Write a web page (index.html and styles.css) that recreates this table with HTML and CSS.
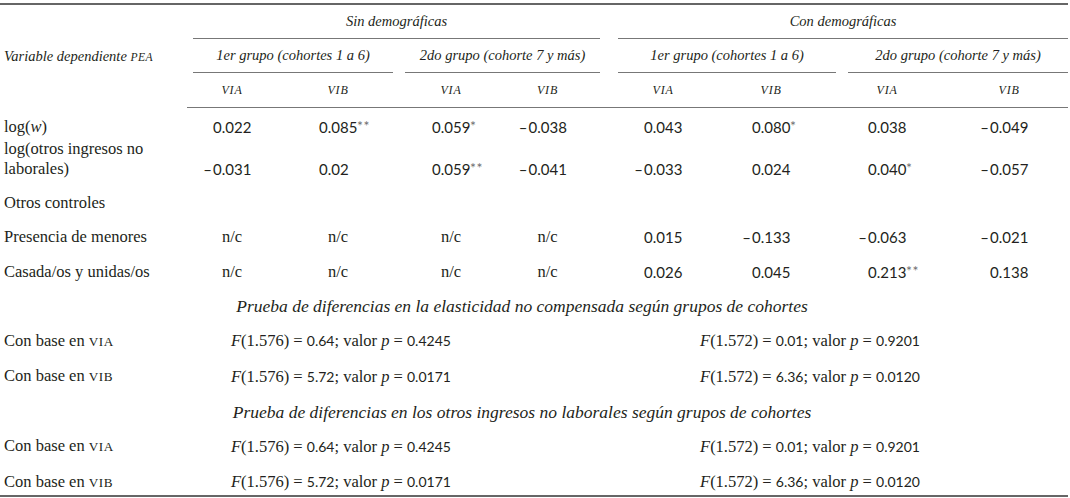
FILE: index.html
```html
<!DOCTYPE html>
<html lang="es">
<head>
<meta charset="utf-8">
<title>Tabla</title>
<link rel="stylesheet" href="styles.css">
</head>
<body>
<table class="t">
  <colgroup>
    <col class="c-lab"><col class="c1"><col class="c2"><col class="c3"><col class="c4"><col class="c-sp"><col class="c5"><col class="c6"><col class="c7"><col class="c8">
  </colgroup>
  <thead>
    <tr class="h1">
      <th class="lab" rowspan="3">Variable dependiente <span class="sc">pea</span></th>
      <th colspan="4"><div class="rule">Sin demográficas</div></th>
      <th></th>
      <th colspan="4"><div class="rule rule-end">Con demográficas</div></th>
    </tr>
    <tr class="h2">
      <th colspan="2"><div class="rule">1er grupo (cohortes 1 a 6)</div></th>
      <th colspan="2"><div class="rule">2do grupo (cohorte 7 y más)</div></th>
      <th></th>
      <th colspan="2"><div class="rule">1er grupo (cohortes 1 a 6)</div></th>
      <th colspan="2"><div class="rule rule-end">2do grupo (cohorte 7 y más)</div></th>
    </tr>
    <tr class="h3 cols">
      <th class="k1">VIA</th><th class="k2">VIB</th><th class="k3">VIA</th><th class="k4">VIB</th><th></th><th class="k5">VIA</th><th class="k6">VIB</th><th class="k7">VIA</th><th class="k8">VIB</th>
    </tr>
  </thead>
  <tbody>
    <tr class="r-first cols">
      <td class="lab">log(<i>w</i>)</td>
      <td class="k1"><span class="v"><span class="m"></span><span class="d">0.022</span><span class="s"></span></span></td>
      <td class="k2"><span class="v"><span class="m"></span><span class="d">0.085</span><span class="s">**</span></span></td>
      <td class="k3"><span class="v"><span class="m"></span><span class="d">0.059</span><span class="s">*</span></span></td>
      <td class="k4"><span class="v"><span class="m">–</span><span class="d">0.038</span><span class="s"></span></span></td>
      <td></td>
      <td class="k5"><span class="v"><span class="m"></span><span class="d">0.043</span><span class="s"></span></span></td>
      <td class="k6"><span class="v"><span class="m"></span><span class="d">0.080</span><span class="s">*</span></span></td>
      <td class="k7"><span class="v"><span class="m"></span><span class="d">0.038</span><span class="s"></span></span></td>
      <td class="k8"><span class="v"><span class="m">–</span><span class="d">0.049</span><span class="s"></span></span></td>
    </tr>
    <tr class="r-two cols">
      <td class="lab">log(otros ingresos no laborales)</td>
      <td class="k1"><span class="v"><span class="m">–</span><span class="d">0.031</span><span class="s"></span></span></td>
      <td class="k2"><span class="v"><span class="m"></span><span class="d">0.02</span><span class="s"></span></span></td>
      <td class="k3"><span class="v"><span class="m"></span><span class="d">0.059</span><span class="s">**</span></span></td>
      <td class="k4"><span class="v"><span class="m">–</span><span class="d">0.041</span><span class="s"></span></span></td>
      <td></td>
      <td class="k5"><span class="v"><span class="m">–</span><span class="d">0.033</span><span class="s"></span></span></td>
      <td class="k6"><span class="v"><span class="m"></span><span class="d">0.024</span><span class="s"></span></span></td>
      <td class="k7"><span class="v"><span class="m"></span><span class="d">0.040</span><span class="s">*</span></span></td>
      <td class="k8"><span class="v"><span class="m">–</span><span class="d">0.057</span><span class="s"></span></span></td>
    </tr>
    <tr>
      <td class="lab">Otros controles</td>
      <td colspan="9"></td>
    </tr>
    <tr class="cols">
      <td class="lab">Presencia de menores</td>
      <td class="nc k1">n/c</td><td class="nc k2">n/c</td><td class="nc k3">n/c</td><td class="nc k4">n/c</td>
      <td></td>
      <td class="k5"><span class="v"><span class="m"></span><span class="d">0.015</span><span class="s"></span></span></td>
      <td class="k6"><span class="v"><span class="m">–</span><span class="d">0.133</span><span class="s"></span></span></td>
      <td class="k7"><span class="v"><span class="m">–</span><span class="d">0.063</span><span class="s"></span></span></td>
      <td class="k8"><span class="v"><span class="m">–</span><span class="d">0.021</span><span class="s"></span></span></td>
    </tr>
    <tr class="cols">
      <td class="lab">Casada/os y unidas/os</td>
      <td class="nc k1">n/c</td><td class="nc k2">n/c</td><td class="nc k3">n/c</td><td class="nc k4">n/c</td>
      <td></td>
      <td class="k5"><span class="v"><span class="m"></span><span class="d">0.026</span><span class="s"></span></span></td>
      <td class="k6"><span class="v"><span class="m"></span><span class="d">0.045</span><span class="s"></span></span></td>
      <td class="k7"><span class="v"><span class="m"></span><span class="d">0.213</span><span class="s">**</span></span></td>
      <td class="k8"><span class="v"><span class="m"></span><span class="d">0.138</span><span class="s"></span></span></td>
    </tr>
    <tr>
      <td class="pr" colspan="10">Prueba de diferencias en la elasticidad no compensada según grupos de cohortes</td>
    </tr>
    <tr>
      <td class="lab">Con base en <span class="sc">via</span></td>
      <td class="f f-sin" colspan="4"><i>F</i>(1.576) = <span class="sn">0.64</span>; valor <i>p</i> = <span class="sn">0.4245</span></td>
      <td></td>
      <td class="f f-con" colspan="4"><i>F</i>(1.572) = <span class="sn">0.01</span>; valor <i>p</i> = <span class="sn">0.9201</span></td>
    </tr>
    <tr>
      <td class="lab">Con base en <span class="sc">vib</span></td>
      <td class="f f-sin" colspan="4"><i>F</i>(1.576) = <span class="sn">5.72</span>; valor <i>p</i> = <span class="sn">0.0171</span></td>
      <td></td>
      <td class="f f-con" colspan="4"><i>F</i>(1.572) = <span class="sn">6.36</span>; valor <i>p</i> = <span class="sn">0.0120</span></td>
    </tr>
    <tr>
      <td class="pr" colspan="10">Prueba de diferencias en los otros ingresos no laborales según grupos de cohortes</td>
    </tr>
    <tr>
      <td class="lab">Con base en <span class="sc">via</span></td>
      <td class="f f-sin" colspan="4"><i>F</i>(1.576) = <span class="sn">0.64</span>; valor <i>p</i> = <span class="sn">0.4245</span></td>
      <td></td>
      <td class="f f-con" colspan="4"><i>F</i>(1.572) = <span class="sn">0.01</span>; valor <i>p</i> = <span class="sn">0.9201</span></td>
    </tr>
    <tr class="r-last">
      <td class="lab">Con base en <span class="sc">vib</span></td>
      <td class="f f-sin" colspan="4"><i>F</i>(1.576) = <span class="sn">5.72</span>; valor <i>p</i> = <span class="sn">0.0171</span></td>
      <td></td>
      <td class="f f-con" colspan="4"><i>F</i>(1.572) = <span class="sn">6.36</span>; valor <i>p</i> = <span class="sn">0.0120</span></td>
    </tr>
  </tbody>
</table>
</body>
</html>
```

FILE: styles.css
```css
html, body {
  margin: 0;
  padding: 0;
  background: #ffffff;
}

body {
  color: #231f20;
  font-family: "Liberation Serif", "Times New Roman", serif;
  font-size: 16.5px;
}

.t {
  border-collapse: collapse;
  table-layout: fixed;
  width: 1068px;
  margin: 3px 0 0 0;
  border-top: 2px solid #666666;
  border-bottom: 2px solid #666666;
}

.c-lab { width: 187px; }
.c1 { width: 90px; }
.c2 { width: 122px; }
.c3 { width: 98px; }
.c4 { width: 109px; }
.c-sp { width: 6px; }
.c5 { width: 102px; }
.c6 { width: 128px; }
.c7 { width: 108px; }
.c8 { width: 118px; }

th, td {
  padding: 0;
  font-weight: normal;
  vertical-align: middle;
}

thead th {
  font-style: italic;
  font-size: 14.5px;
  text-align: center;
}

.h1 th, .h2 th {
  height: 34px;
  vertical-align: bottom;
}

.rule {
  margin: 0 6px;
  height: 33px;
  line-height: 33px;
  border-bottom: 1px solid #777777;
  white-space: nowrap;
}

.rule-end {
  margin-right: 0;
}

.h3 th {
  height: 34px;
  border-bottom: 1px solid #777777;
  font-size: 12px;
  letter-spacing: 0.8px;
}

thead th.lab {
  vertical-align: middle;
  text-align: left;
  padding-left: 4px;
  font-size: 14.5px;
  white-space: nowrap;
}

.sc {
  text-transform: uppercase;
  font-size: 0.8em;
  letter-spacing: 0.5px;
}

/* per-column nudges: decimal alignment is not centred in every column */
.cols .k3 { padding-left: 6px; }
.cols .k4 { padding-right: 8px; }
.cols .k6 { padding-right: 14px; }
.cols .k7 { padding-right: 18px; }

tbody td {
  padding-top: 6px;
  padding-bottom: 6px;
  line-height: 22.5px;
}

tbody td.lab {
  padding-left: 4px;
  padding-right: 10px;
  text-align: left;
}

.r-first td {
  padding-top: 8px;
  padding-bottom: 0;
}

.r-two td {
  padding-top: 0;
  padding-bottom: 7px;
  line-height: 20px;
  vertical-align: bottom;
}

.r-last td {
  padding-bottom: 1px;
}

.v {
  display: grid;
  grid-template-columns: 1fr 38px 1fr;
  font-family: "Lato", "Open Sans", sans-serif;
  font-size: 15px;
}

.m {
  text-align: right;
  padding-right: 1px;
}

.d {
  text-align: left;
  white-space: nowrap;
}

.s {
  text-align: left;
  color: #6f6f6f;
  font-size: 14px;
  letter-spacing: 0.5px;
  position: relative;
  top: -1px;
}

.nc {
  text-align: center;
}

.pr {
  text-align: center;
  font-style: italic;
  font-size: 17.5px;
  padding-right: 24px;
}

.f {
  text-align: left;
  white-space: nowrap;
}

.f-sin {
  padding-left: 44px;
}

.f-con {
  padding-left: 88px;
}

.sn {
  font-family: "Lato", "Open Sans", sans-serif;
  font-size: 14px;
}
```
